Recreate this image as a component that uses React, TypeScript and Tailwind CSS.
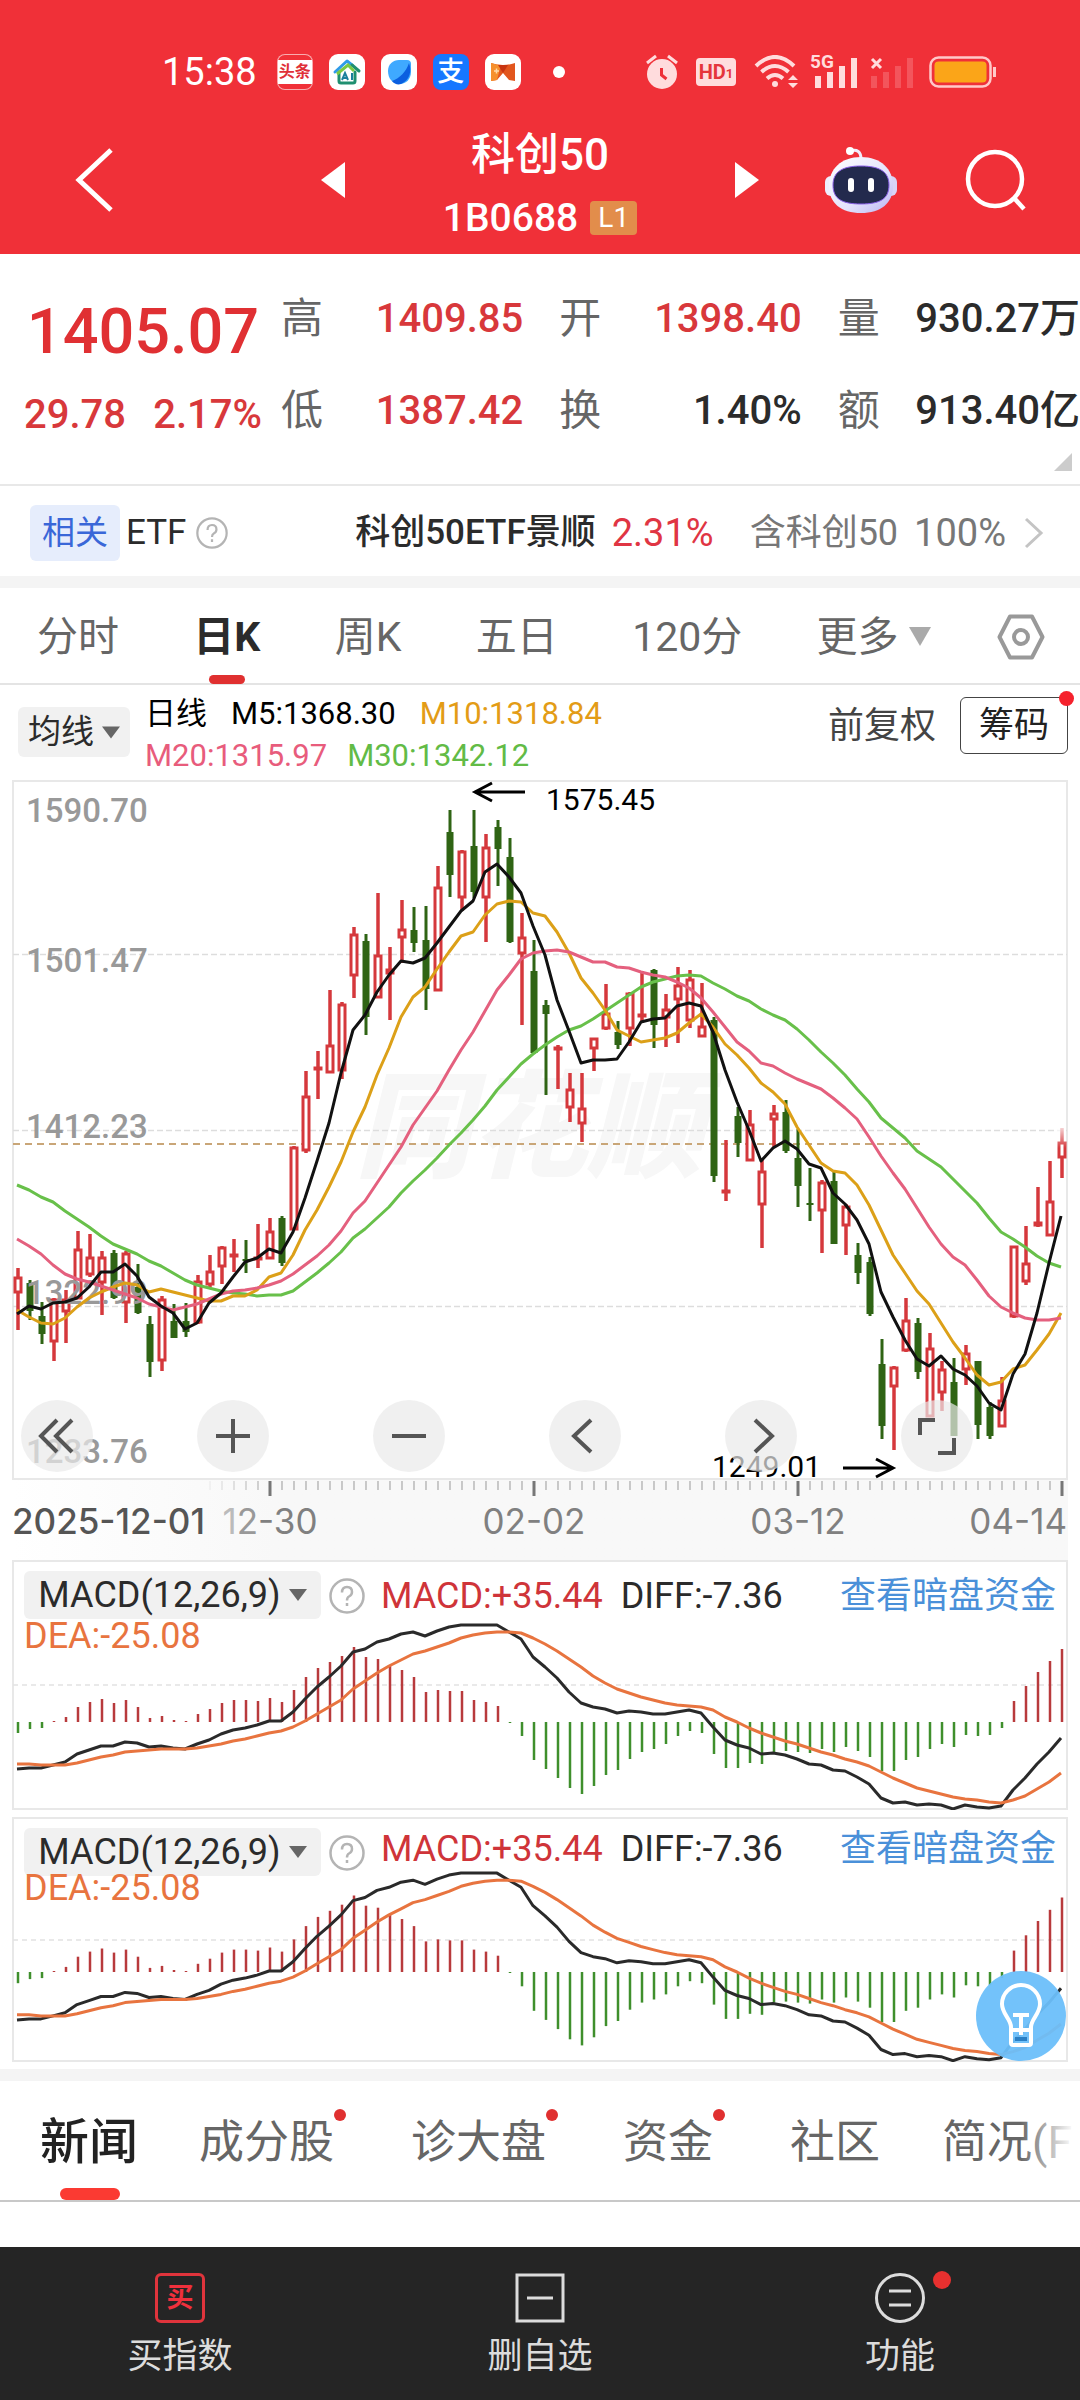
import React from "react";

type Candle = [up: 0 | 1, high: number, top: number, bottom: number, low: number];

const candles: Candle[] = [
  [1, 1268, 1277, 1293, 1330], [0, 1280, 1283, 1311, 1320], [0, 1302, 1316, 1334, 1344], [1, 1298, 1299, 1342, 1361],
  [1, 1290, 1299, 1312, 1343], [1, 1231, 1249, 1299, 1299], [1, 1234, 1257, 1275, 1277], [1, 1251, 1257, 1283, 1315],
  [0, 1250, 1253, 1298, 1299], [1, 1251, 1253, 1303, 1323], [0, 1264, 1287, 1313, 1314], [0, 1316, 1324, 1362, 1377],
  [1, 1296, 1299, 1361, 1371], [0, 1304, 1321, 1338, 1338], [0, 1303, 1321, 1332, 1337], [1, 1275, 1281, 1323, 1324],
  [1, 1255, 1271, 1285, 1287], [1, 1246, 1247, 1267, 1284], [1, 1239, 1254, 1257, 1272], [0, 1240, 1259, 1260, 1273],
  [1, 1224, 1257, 1260, 1268], [1, 1218, 1231, 1259, 1259], [0, 1216, 1218, 1263, 1266], [1, 1146, 1147, 1230, 1230],
  [1, 1071, 1096, 1151, 1153], [1, 1051, 1067, 1070, 1099], [1, 990, 1045, 1073, 1073], [1, 1002, 1004, 1071, 1079],
  [1, 927, 934, 976, 998], [0, 934, 941, 1017, 1035], [1, 893, 955, 998, 998], [1, 947, 969, 974, 1020],
  [1, 900, 929, 938, 963], [0, 907, 930, 943, 952], [0, 906, 940, 989, 1010], [1, 866, 887, 991, 991],
  [0, 810, 832, 875, 897], [1, 850, 851, 898, 911], [0, 810, 846, 892, 898], [1, 834, 847, 898, 942],
  [0, 820, 827, 849, 886], [0, 838, 857, 942, 943], [1, 913, 937, 954, 1025], [0, 940, 971, 1053, 1054],
  [0, 1000, 1005, 1014, 1095], [1, 1045, 1047, 1049, 1089], [1, 1073, 1089, 1108, 1122], [1, 1073, 1108, 1124, 1142],
  [1, 1038, 1038, 1049, 1071], [1, 984, 1013, 1029, 1030], [0, 1021, 1032, 1045, 1049], [1, 992, 993, 1029, 1046],
  [1, 971, 1014, 1016, 1023], [0, 969, 970, 1025, 1048], [1, 994, 1009, 1018, 1047], [1, 967, 985, 1000, 1043],
  [1, 970, 979, 1021, 1028], [1, 983, 1026, 1037, 1037], [0, 1017, 1020, 1176, 1182], [1, 1140, 1190, 1193, 1201],
  [0, 1107, 1116, 1143, 1157], [1, 1110, 1124, 1161, 1161], [1, 1160, 1171, 1205, 1248], [1, 1105, 1113, 1120, 1147],
  [0, 1100, 1112, 1151, 1153], [0, 1129, 1158, 1186, 1207], [0, 1168, 1203, 1204, 1221], [1, 1180, 1182, 1211, 1253],
  [0, 1170, 1181, 1244, 1244], [1, 1204, 1206, 1226, 1255], [0, 1243, 1255, 1273, 1284], [0, 1257, 1262, 1314, 1316],
  [0, 1339, 1364, 1426, 1439], [1, 1366, 1367, 1387, 1450], [1, 1298, 1320, 1351, 1352], [0, 1318, 1323, 1372, 1379],
  [1, 1333, 1348, 1417, 1417], [1, 1361, 1369, 1393, 1411], [0, 1358, 1382, 1436, 1436], [1, 1345, 1353, 1370, 1385],
  [0, 1361, 1361, 1425, 1439], [0, 1402, 1407, 1436, 1439], [1, 1377, 1400, 1427, 1427], [1, 1246, 1246, 1317, 1318],
  [1, 1226, 1263, 1282, 1285], [1, 1187, 1222, 1226, 1227], [1, 1161, 1201, 1236, 1236], [1, 1128, 1142, 1158, 1178],
];

const ma5 = [1314, 1306, 1309, 1303, 1302, 1298, 1287, 1272, 1272, 1264, 1276, 1297, 1306, 1313, 1329, 1323, 1303, 1293, 1277, 1262, 1258, 1249, 1253, 1232, 1198, 1161, 1123, 1073, 1030, 1015, 992, 975, 961, 963, 958, 943, 927, 911, 901, 872, 864, 877, 893, 926, 955, 1000, 1031, 1063, 1060, 1060, 1059, 1042, 1022, 1019, 1018, 1006, 1003, 1006, 1032, 1070, 1102, 1130, 1161, 1148, 1141, 1149, 1164, 1168, 1193, 1204, 1220, 1244, 1292, 1317, 1340, 1359, 1366, 1356, 1369, 1375, 1386, 1403, 1410, 1374, 1354, 1313, 1263, 1216];
const ma10 = [1310, 1317, 1323, 1324, 1318, 1307, 1298, 1292, 1287, 1283, 1285, 1292, 1289, 1292, 1295, 1298, 1301, 1301, 1296, 1296, 1290, 1277, 1273, 1255, 1230, 1210, 1187, 1162, 1132, 1107, 1075, 1048, 1017, 997, 987, 969, 952, 936, 932, 915, 904, 901, 902, 913, 916, 932, 953, 978, 993, 1010, 1030, 1036, 1042, 1040, 1038, 1033, 1023, 1014, 1027, 1044, 1055, 1068, 1083, 1092, 1104, 1127, 1145, 1163, 1171, 1173, 1185, 1205, 1230, 1255, 1273, 1291, 1304, 1323, 1342, 1358, 1375, 1385, 1382, 1369, 1365, 1350, 1334, 1313];
const ma20 = [1239, 1246, 1254, 1265, 1274, 1279, 1282, 1286, 1290, 1294, 1298, 1304, 1307, 1310, 1307, 1304, 1299, 1294, 1291, 1290, 1288, 1285, 1281, 1274, 1265, 1256, 1245, 1231, 1213, 1201, 1183, 1165, 1147, 1125, 1108, 1091, 1070, 1050, 1032, 1011, 990, 975, 959, 953, 951, 950, 952, 957, 962, 962, 967, 968, 972, 975, 977, 982, 988, 998, 1012, 1027, 1042, 1051, 1063, 1066, 1073, 1079, 1084, 1089, 1098, 1108, 1119, 1137, 1156, 1173, 1189, 1208, 1227, 1244, 1257, 1265, 1280, 1296, 1307, 1313, 1318, 1320, 1320, 1318];
const ma30 = [1185, 1190, 1197, 1202, 1211, 1219, 1227, 1236, 1244, 1249, 1254, 1261, 1266, 1273, 1280, 1285, 1288, 1291, 1293, 1294, 1296, 1295, 1295, 1291, 1282, 1273, 1263, 1252, 1238, 1229, 1218, 1207, 1193, 1181, 1170, 1158, 1145, 1133, 1120, 1106, 1090, 1077, 1064, 1054, 1045, 1037, 1030, 1026, 1019, 1011, 1003, 995, 987, 982, 979, 976, 975, 976, 983, 989, 996, 1001, 1009, 1015, 1020, 1029, 1040, 1052, 1063, 1075, 1089, 1102, 1118, 1128, 1138, 1151, 1159, 1167, 1179, 1191, 1203, 1218, 1232, 1239, 1247, 1256, 1263, 1267];

const macdBars = [11, 7, 6, -1, -5, -15, -20, -23, -19, -22, -15, -4, -6, -2, -1, -8, -13, -19, -22, -22, -21, -24, -20, -32, -45, -54, -60, -66, -75, -65, -63, -57, -52, -45, -30, -32, -31, -31, -22, -20, -16, 1, 14, 38, 47, 56, 66, 72, 64, 53, 48, 37, 30, 27, 22, 14, 9, 11, 32, 46, 46, 41, 42, 30, 29, 30, 31, 27, 30, 25, 29, 35, 49, 49, 38, 35, 27, 22, 25, 13, 14, 13, 6, -21, -36, -50, -61, -73];
const diff = [47, 46, 46, 43, 40, 32, 28, 24, 24, 20, 21, 25, 24, 26, 27, 22, 18, 12, 8, 6, 3, -1, -1, -10, -23, -35, -45, -56, -70, -73, -80, -83, -88, -90, -86, -91, -95, -97, -97, -97, -97, -90, -83, -65, -55, -44, -30, -19, -15, -13, -9, -11, -10, -8, -8, -10, -12, -9, 5, 18, 23, 26, 32, 31, 33, 37, 42, 43, 48, 49, 55, 62, 76, 81, 80, 83, 82, 83, 87, 83, 85, 86, 84, 68, 56, 42, 30, 16];
const dea = [42, 42, 43, 43, 43, 41, 38, 35, 33, 30, 29, 28, 27, 27, 27, 26, 24, 22, 19, 17, 14, 11, 9, 5, -1, -8, -15, -22, -33, -41, -49, -56, -62, -68, -71, -75, -79, -84, -87, -89, -90, -90, -89, -84, -78, -71, -63, -55, -46, -39, -33, -29, -25, -22, -19, -17, -16, -15, -12, -5, 0, 6, 11, 15, 19, 22, 26, 30, 33, 37, 40, 44, 50, 56, 61, 66, 69, 72, 75, 77, 78, 80, 81, 78, 74, 67, 60, 51];

const px = (i: number) => 5 + i * 12;
const line = (ys: number[], offset: number, scale = 1) =>
  ys.map((y, i) => `${px(i)},${(y * scale + offset).toFixed(1)}`).join(" ");

const TOP = 780;

function StatusBar() {
  return (
    <div className="flex items-center justify-between pr-[83px] pl-[162px] text-white">
      <div className="flex items-center gap-4">
        <span className="mr-1 text-[38px] leading-[40px]">15:38</span>
        <span className="flex size-9 items-center justify-center rounded-lg border border-white/60 bg-[#f03038]">
          <span className="w-full bg-white text-center text-[16px] leading-[24px] font-bold text-[#e03038]">头条</span>
        </span>
        <svg className="size-9" viewBox="0 0 36 36">
          <rect width="36" height="36" rx="9" fill="#fff" />
          <path d="M6 18 18 7l5 4" fill="none" stroke="#2f9be8" strokeWidth="3" strokeLinecap="round" strokeLinejoin="round" />
          <path d="M23 11l7 6M10 18v9q0 2 2 2h12q2 0 2-2v-9" fill="none" stroke="#1f8f70" strokeWidth="3" strokeLinecap="round" />
          <path d="M8 20 19 11l6 6" fill="none" stroke="#7ac943" strokeWidth="3" />
          <path d="m13 26 3-7 3 7M14 24h4M23 19v7" fill="none" stroke="#1b7f9c" strokeWidth="2" />
        </svg>
        <svg className="size-9" viewBox="0 0 36 36">
          <rect width="36" height="36" rx="9" fill="#fff" />
          <path d="M7 17C7 10 12 6 18 6h8q4 0 4 4v8c0 7-5 12-11 12C12 30 7 25 7 17Z" fill="#3fa9ff" />
          <path d="M28 9c3 8 1 17-8 21-3 1-7 0-9-3 8-3 14-9 17-18Z" fill="#0b5fe0" />
        </svg>
        <span className="flex size-9 items-center justify-center rounded-lg bg-[#1677ff] text-[27px] leading-[36px] font-medium">支</span>
        <svg className="size-9" viewBox="0 0 36 36">
          <rect width="36" height="36" rx="9" fill="#fff" />
          <path d="M6 9q12 4 24 0v18l-6-1-6-7-6 7-6 1Z" fill="#e2561d" />
          <path d="M6 9q5 2 10 2l-4 15-6 1Z" fill="#f6902c" />
          <path d="M13 11h10l-5 8Z" fill="#c83410" />
          <path d="M9 17h5M11.500 14.500v5" stroke="#ffd9a8" strokeWidth="1.500" />
        </svg>
        <span className="ml-4 size-3 rounded-full bg-white" />
      </div>
      <div className="flex items-center text-[#ffdcdd]">
        <svg className="mr-[18px] h-9 w-8" viewBox="0 0 32 36" fill="currentColor">
          <circle cx="16" cy="20" r="15" />
          <path d="m1 9 9-7M31 9l-9-7" stroke="currentColor" strokeWidth="3" />
          <path d="M15.500 14v7l5 4" stroke="#ee3038" strokeWidth="3" fill="none" />
        </svg>
        <span className="mr-[18px] flex h-7 w-10 items-center justify-center rounded-sm bg-[#ffdcdd] text-[20px] leading-[28px] font-bold text-[#e5353c]">
          HD<span className="pt-1 text-[13px]">1</span>
        </span>
        <svg className="mr-[10px] h-[34px] w-[46px]" viewBox="0 0 46 34" fill="none" stroke="currentColor" strokeWidth="4">
          <path d="M2 11Q21-7 40 11M7.500 17Q21 5 34.500 17M13 23.500q8-7 16 0" />
          <circle cx="21" cy="29" r="3" fill="currentColor" stroke="none" />
          <path d="m34 25 5-5 5 5ZM34 28l5 5 5-5Z" fill="currentColor" stroke="none" />
        </svg>
        <span className="relative mr-3">
          <svg className="h-[34px] w-12" viewBox="0 0 48 34" fill="currentColor">
            <path d="M5 21h6v12H5ZM17 17h6v16h-6ZM29 11h6v22h-6ZM41 3h6v30h-6Z" />
          </svg>
          <span className="absolute -top-1 left-0 text-[19px] leading-[22px] font-bold">5G</span>
        </span>
        <svg className="mr-[15px] h-[34px] w-11" viewBox="0 0 44 34" fill="currentColor">
          <path d="M1 21h6v12H1ZM13 17h6v16h-6ZM25 11h6v22h-6ZM37 3h6v30h-6Z" opacity=".22" />
          <path d="m2 4 9 9m0-9-9 9" stroke="currentColor" strokeWidth="3" />
        </svg>
        <svg className="h-8 w-[68px]" viewBox="0 0 68 32" fill="none">
          <rect x="1.500" y="1.500" width="60" height="29" rx="8" stroke="#ffc9c9" strokeWidth="2.500" />
          <rect x="5.500" y="5.500" width="52" height="21" rx="4" fill="#fba518" />
          <path d="M65.500 11v10" stroke="#ffc9c9" strokeWidth="3" />
        </svg>
      </div>
    </div>
  );
}

function Robot() {
  return (
    <svg className="h-[68px] w-[74px]" viewBox="0 0 74 68">
      <defs>
        <linearGradient id="shell" x1="0" y1="0" x2="1" y2="1">
          <stop offset="0" stopColor="#fff" />
          <stop offset=".6" stopColor="#e4e2fb" />
          <stop offset="1" stopColor="#b9b4f2" />
        </linearGradient>
      </defs>
      <path d="M26 5q11-3 11 8" fill="none" stroke="#f0ecfb" strokeWidth="3" />
      <circle cx="26" cy="5" r="4" fill="#fff" />
      <rect x="1" y="30" width="12" height="20" rx="6" fill="#eeeefd" />
      <rect x="61" y="30" width="12" height="20" rx="6" fill="#d9d4f6" />
      <path d="M37 11c20 0 32 12 32 29S57 67 37 67 5 57 5 40s12-29 32-29Z" fill="url(#shell)" />
      <path d="M37 20c19 0 28 6 28 19 0 14-9 19-28 19S9 53 9 39c0-13 9-19 28-19Z" fill="#232a4d" stroke="#8a5fe8" strokeWidth="1" />
      <rect x="24" y="32" width="6" height="14" rx="3" fill="#fff" />
      <rect x="44" y="32" width="6" height="14" rx="3" fill="#fff" />
    </svg>
  );
}

function Header() {
  return (
    <header className="h-[254px] bg-[#f03038] pt-[52px]">
      <StatusBar />
      <div className="grid grid-cols-[1fr_390px_1fr] items-center pt-[30px]">
        <div className="flex items-center justify-between pb-[10px] pl-[74px]">
          <button aria-label="返回">
            <svg className="h-[66px] w-10" viewBox="0 0 40 66" fill="none" stroke="#fff" strokeWidth="5">
              <path d="M37 3 5 33l32 30" />
            </svg>
          </button>
          <button aria-label="上一个">
            <svg className="h-9 w-6" viewBox="0 0 24 36" fill="#fff"><path d="M24 0v36L0 18Z" /></svg>
          </button>
        </div>
        <div className="flex flex-col items-center text-white">
          <h1 className="text-[44px] leading-[66px] font-medium">科创50</h1>
          <div className="flex items-center gap-3">
            <span className="text-[39px] leading-[60px] font-medium">1B0688</span>
            <span className="h-[34px] w-[47px] rounded-sm bg-[#e28d4b] text-center text-[28px] leading-[34px]">L1</span>
          </div>
        </div>
        <div className="flex items-center pr-[52px] pb-[10px]">
          <button aria-label="下一个">
            <svg className="h-9 w-6" viewBox="0 0 24 36" fill="#fff"><path d="M0 0v36l24-18Z" /></svg>
          </button>
          <button aria-label="智能助手" className="mr-auto ml-[65px]"><Robot /></button>
          <button aria-label="搜索">
            <svg className="size-16" viewBox="0 0 64 64" fill="none" stroke="#fff" strokeWidth="4.500">
              <circle cx="31" cy="31" r="27" />
              <path d="m50 50 10 11" />
            </svg>
          </button>
        </div>
      </div>
    </header>
  );
}

const quotes = [
  { label: "高", value: "1409.85", red: true },
  { label: "开", value: "1398.40", red: true },
  { label: "量", value: "930.27万", red: false },
  { label: "低", value: "1387.42", red: true },
  { label: "换", value: "1.40%", red: false },
  { label: "额", value: "913.40亿", red: false },
];

function Quote() {
  return (
    <section className="relative flex h-[232px] border-b-2 border-[#e8e8e8] pt-[36px]">
      <div className="w-[281px] pl-[24px]">
        <div className="w-[238px] text-center text-[63px] leading-[84px] font-medium text-[#e03033]">1405.07</div>
        <div className="flex w-[238px] justify-between pt-[16px] text-[40px] leading-[50px] font-medium text-[#d8383b]">
          <span>29.78</span>
          <span>2.17%</span>
        </div>
      </div>
      <dl className="grid flex-1 grid-cols-3 content-start gap-x-9 text-[40px] font-medium">
        {quotes.map((q) => (
          <div key={q.label} className="flex h-[92px] justify-between whitespace-nowrap leading-[58px]">
            <dt className="text-[42px] font-normal text-[#666]">{q.label}</dt>
            <dd className={q.red ? "text-[#d8383b]" : "text-[#2b2b2b]"}>{q.value}</dd>
          </div>
        ))}
      </dl>
      <svg className="absolute right-[8px] bottom-[13px] h-[18px] w-[18px]" viewBox="0 0 18 18" fill="#ccc"><path d="M18 0v18H0Z" /></svg>
    </section>
  );
}

function Help({ className }: { className: string }) {
  return (
    <svg className={className} viewBox="0 0 36 36" fill="none" stroke="#b4b4b4" strokeWidth="2.500">
      <circle cx="18" cy="18" r="16.500" />
      <path d="M13 14.500q0-5.500 5-5.500t5 5q0 3-3 4.500-2 1-2 4M18 25v3" />
    </svg>
  );
}

function EtfRow() {
  return (
    <section className="flex h-[90px] items-center pt-[3px] pr-[36px] pl-[30px] text-[35px] leading-[56px] whitespace-nowrap text-[#2b2b2b]">
      <span className="rounded-md bg-[#e6edfc] px-3 text-[33px] text-[#3a67d8]">相关</span>
      <span className="ml-[6px]">ETF</span>
      <button aria-label="说明" className="ml-[10px]"><Help className="size-8" /></button>
      <a href="#etf" className="ml-auto flex items-center">
        <span className="font-medium">科创50ETF景顺</span>
        <span className="ml-4 text-[38px] text-[#e03543]">2.31%</span>
        <span className="ml-9 text-[36px] text-[#777]">含科创50</span>
        <span className="ml-4 text-[38px] text-[#777]">100%</span>
        <svg className="ml-[18px] h-8 w-5" viewBox="0 0 20 32" fill="none" stroke="#c4c4c4" strokeWidth="3"><path d="m2 2 15 14L2 30" /></svg>
      </a>
    </section>
  );
}

function PeriodTabs() {
  return (
    <nav className="flex h-[97px] items-center justify-between border-b-2 border-[#e4e4e4] pt-[2px] pr-[35px] pl-[37px] text-[41px] leading-[60px] text-[#666]">
      <button>分时</button>
      <button className="relative font-bold text-[#2b2b2b]">
        日K
        <span className="absolute -bottom-[17px] left-1/2 h-[9px] w-9 -translate-x-1/2 rounded-full bg-[#e03030]" />
      </button>
      <button>周K</button>
      <button>五日</button>
      <button>120分</button>
      <button className="-mr-2 flex items-center gap-[10px]">
        更多
        <svg className="h-[19px] w-[22px]" viewBox="0 0 22 19" fill="#aaa"><path d="M0 0h22L11 19Z" /></svg>
      </button>
      <button aria-label="设置">
        <svg className="h-[46px] w-12" viewBox="0 0 48 46" fill="none" stroke="#999" strokeWidth="4">
          <path d="M13 2.500h22L45.500 23 35 43.500H13L2.500 23Z" strokeLinejoin="round" />
          <circle cx="24" cy="23" r="7" />
        </svg>
      </button>
    </nav>
  );
}

function Legend() {
  return (
    <section className="flex h-[95px] items-start justify-between pr-[12px] pl-[18px] whitespace-nowrap">
      <div className="flex items-start">
        <button className="mt-[22px] flex h-[50px] items-center gap-2 rounded-md bg-[#f1f1f1] px-[10px] text-[33px] text-[#2b2b2b]">
          均线
          <svg className="h-[13px] w-[18px]" viewBox="0 0 18 12" fill="#666"><path d="M0 0h18L9 12Z" /></svg>
        </button>
        <div className="ml-[15px] pt-[8px] text-[31px] leading-[42px]">
          <div className="flex">
            <span className="text-black">日线</span>
            <span className="ml-6 text-black">M5:1368.30</span>
            <span className="ml-6 text-[#e39c16]">M10:1318.84</span>
          </div>
          <div className="flex">
            <span className="text-[#e85c7c]">M20:1315.97</span>
            <span className="ml-5 text-[#62bb46]">M30:1342.12</span>
          </div>
        </div>
      </div>
      <div className="flex items-center pt-[12px]">
        <button className="text-[36px] leading-[56px] text-[#444]">前复权</button>
        <button className="relative ml-6 h-[57px] rounded-md border-[1px] border-[#444] px-[18px] text-[35px] leading-[54px] text-[#222]">
          筹码
          <span className="absolute -top-[7px] -right-[7px] size-[15px] rounded-full bg-[#f5222d]" />
        </button>
      </div>
    </section>
  );
}

const controls = [
  { label: "最早", d: "M36 20 20 36l16 16M51 20 35 36l16 16" },
  { label: "放大", d: "M36 19v34M19 36h34" },
  { label: "缩小", d: "M19 36h34" },
  { label: "左移", d: "M42 20 25 36l17 16" },
  { label: "右移", d: "M30 20l17 16-17 16" },
  { label: "全屏", d: "M34 20H19v15M53 38v15H37" },
];

function KChart() {
  const yLabels: [number, string][] = [[822, "1590.70"], [972, "1501.47"], [1138, "1412.23"], [1304, "1322.99"], [1463, "1233.76"]];
  return (
    <section className="relative mx-3">
      <svg className="block w-full" viewBox="0 0 1056 700" fontFamily="Roboto">
        <defs>
          <linearGradient id="fade" gradientUnits="userSpaceOnUse" x1="0" y1="1122" x2="0" y2="1148">
            <stop offset="0" stopColor="#fff" />
            <stop offset="1" stopColor="#fff" stopOpacity="0" />
          </linearGradient>
        </defs>
        <rect x="1" y="1" width="1054" height="698" fill="#fff" stroke="#e8e8e8" strokeWidth="2" />
        <text x="343" y="388" fontSize="116" fontWeight="900" fontStyle="italic" fill="#f7f7f7" fontFamily="Noto Sans CJK SC">同花顺</text>
        <g transform={`translate(0 ${-TOP})`}>
          <path d="M1 954.500h1054M1 1130.500h1054M1 1306.500h1054" stroke="#ddd" strokeWidth="1.500" strokeDasharray="6 3" />
          <path d="M1 1144h910" stroke="#c9a678" strokeWidth="2" strokeDasharray="7 5" />
          {candles.map(([up, h, t, b, l], i) => {
            const x = px(i) + 1;
            return up ? (
              <g key={i} stroke="#d5383c" fill="#fff">
                <path d={`M${x} ${h}V${l}`} strokeWidth="3.500" />
                <rect x={x - 3} y={t + 1} width="6" height={Math.max(b - t - 2, 1)} strokeWidth="3" />
              </g>
            ) : (
              <g key={i} fill="#2f6414">
                <rect x={x - 1.5} y={h} width="3" height={l - h} />
                <rect x={x - 3.5} y={t} width="7" height={Math.max(b - t, 2)} />
              </g>
            );
          })}
          <rect x="1042" y="1122" width="12" height="26" fill="url(#fade)" />
          <g fill="#999" fontSize="33" fontWeight="500">
            {yLabels.map(([y, t]) => <text key={t} x="14" y={y}>{t}</text>)}
          </g>
          <g fill="none" strokeWidth="3" strokeLinejoin="round">
            <polyline points={line(ma30, 0)} stroke="#68c04a" />
            <polyline points={line(ma10, 0)} stroke="#dca018" />
            <polyline points={line(ma20, 0)} stroke="#e4607e" />
            <polyline points={line(ma5, 0)} stroke="#111" />
          </g>
          <g fill="none" stroke="#000" strokeWidth="3">
            <path d="M513 792h-50m17-9-17 9 17 9M831 1468h50m-17-9 17 9-17 9" />
          </g>
          <g fontSize="30" fill="#000">
            <text x="534" y="810">1575.45</text>
            <text x="700" y="1477">1249.01</text>
          </g>
        </g>
      </svg>
      <div className="absolute inset-x-0 bottom-[8px] flex justify-between pr-[95px] pl-[9px]">
        {controls.map((c) => (
          <button key={c.label} aria-label={c.label} className="size-[72px] rounded-full bg-[#e9e9e9]/70">
            <svg viewBox="0 0 72 72" fill="none" stroke="#555" strokeWidth="4"><path d={c.d} /></svg>
          </button>
        ))}
      </div>
    </section>
  );
}

function DateAxis() {
  return (
    <section className="mx-3 bg-gradient-to-r from-white to-[#f8f8f8] to-25%">
      <svg className="block w-full" viewBox="0 0 1056 80" fontFamily="Inter" fontSize="35" fill="#808080">
        {candles.map((_, i) => {
          if (i < 16) return null;
          const major = i % 22 === 21;
          return (
            <path
              key={i}
              d={`M${px(i) + 1} 1v${major ? 15 : 9}`}
              stroke={major ? "#777" : "#999"}
              strokeWidth={major ? 3 : 1}
              opacity={i < 21 ? (i - 15) / 6 : 1}
            />
          );
        })}
        <text x="0" y="54" fill="#555" fontWeight="500">2025-12-01</text>
        <text x="258" y="54" textAnchor="middle"><tspan fill="#bbb">1</tspan><tspan fill="#999">2</tspan>-30</text>
        <text x="522" y="54" textAnchor="middle">02-02</text>
        <text x="786" y="54" textAnchor="middle">03-12</text>
        <text x="1055" y="54" textAnchor="end">04-14</text>
      </svg>
    </section>
  );
}

type PanelProps = { height: number; base: number; grid: number; scale: number; compact?: boolean };

function MacdPanel({ height, base, grid, scale, compact = false }: PanelProps) {
  return (
    <section className="relative mx-3">
      <svg className="block w-full" viewBox={`0 0 1056 ${height}`}>
        <rect x="1" y="1" width="1054" height={height - 2} fill="#fff" stroke="#e8e8e8" strokeWidth="2" />
        <path d={`M1 ${grid}h1054`} stroke="#e2e2e2" strokeWidth="1.500" strokeDasharray="5 4" />
        {macdBars.map((v, i) => (
          <path key={i} d={`M${px(i) + 1} ${base}v${(v * scale).toFixed(1)}`} stroke={v < 0 ? "#b83a3c" : "#3f8f2c"} strokeWidth="2.500" />
        ))}
        <g fill="none" strokeWidth="3" strokeLinejoin="round">
          <polyline points={line(diff, base, scale)} stroke="#2a2a2a" />
          <polyline points={line(dea, base, scale)} stroke="#e8743f" />
        </g>
      </svg>
      <div className="absolute inset-x-0 top-[11px] pr-[12px] pl-[12px] text-[36px] leading-[50px] whitespace-nowrap">
        <div className="flex h-[50px] items-start">
          <button className="flex h-12 w-[297px] items-center justify-center gap-2 rounded-md bg-[#f1f1f1] text-[#2b2b2b]">
            MACD(12,26,9)
            <svg className="h-3 w-[18px]" viewBox="0 0 18 12" fill="#666"><path d="M0 0h18L9 12Z" /></svg>
          </button>
          <button aria-label="指标说明" className="ml-2 pt-[7px]"><Help className="size-9" /></button>
          <div className={compact ? "ml-4 flex flex-1 leading-[42px]" : "ml-4 flex flex-1"}>
            <span className="text-[#cf3439]">MACD:+35.44</span>
            <span className="ml-[18px] text-[#2b2b2b]">DIFF:-7.36</span>
            <a href="#funds" className="ml-auto text-[#4a90d9]">查看暗盘资金</a>
          </div>
        </div>
        <div className={compact ? "-mt-[15px] text-[#e8743f]" : "-mt-[10px] text-[#e8743f]"}>DEA:-25.08</div>
      </div>
    </section>
  );
}

const newsTabs = [
  { label: "成分股", dot: true },
  { label: "诊大盘", dot: true },
  { label: "资金", dot: true },
  { label: "社区", dot: false },
];

function NewsTabs() {
  return (
    <nav className="relative flex h-[121px] items-center gap-[77px] overflow-hidden border-b-2 border-[#c8c8c8] pt-[5px] pl-[40px] text-[45px] leading-[64px] whitespace-nowrap text-[#666]">
      <button className="-mr-[16px] text-[49px] font-medium text-[#222]">新闻</button>
      <span className="absolute bottom-0 left-[60px] h-3 w-[60px] rounded-full bg-[#fb3a32]" />
      {newsTabs.map((t) => (
        <button key={t.label} className="relative">
          {t.label}
          {t.dot && <span className="absolute -top-[2px] -right-[12px] size-3 rounded-full bg-[#e03030]" />}
        </button>
      ))}
      <button className="-ml-[15px]">简况(F</button>
      <div className="absolute inset-y-0 right-0 w-[60px] bg-gradient-to-r from-white/0 to-white to-90%" />
    </nav>
  );
}

function BottomNav() {
  return (
    <footer className="grid h-[153px] grid-cols-3 bg-[#252525] pt-[26px] text-[35px] leading-[48px] text-[#dcdcdc]">
      <button className="flex flex-col items-center gap-[10px]">
        <span className="flex size-[50px] items-center justify-center rounded-md border-[3px] border-[#e0343c] text-[27px] leading-[44px] font-bold text-[#f0303c]">买</span>
        买指数
      </button>
      <button className="flex flex-col items-center gap-[10px]">
        <svg className="size-[50px]" viewBox="0 0 50 50" fill="none" stroke="#dcdcdc" strokeWidth="3"><path d="M2 2h46v46H2ZM12 25h26" /></svg>
        删自选
      </button>
      <button className="flex flex-col items-center gap-[10px]">
        <span className="relative">
          <svg className="size-[50px]" viewBox="0 0 50 50" fill="none" stroke="#dcdcdc" strokeWidth="3"><circle cx="25" cy="25" r="23.500" /><path d="M14 18h22M14 32h22" /></svg>
          <span className="absolute -top-[2px] -right-[26px] size-[18px] rounded-full bg-[#e8302f]" />
        </span>
        功能
      </button>
    </footer>
  );
}

export default function App() {
  return (
    <div className="min-h-screen bg-white font-['Roboto','Noto_Sans_CJK_SC',sans-serif]">
      <Header />
      <main>
        <Quote />
        <EtfRow />
        <div className="h-3 bg-[#f4f4f4]" />
        <PeriodTabs />
        <Legend />
        <KChart />
        <DateAxis />
        <MacdPanel height={250} base={162} grid={125} scale={1} />
        <div className="h-[7px]" />
        <div className="relative">
          <MacdPanel height={245} base={155} grid={123} scale={1.02} compact />
          <button aria-label="提示" className="absolute right-[14px] bottom-[1px] size-[90px] rounded-full bg-[#6cbffa]/95">
            <svg viewBox="0 0 90 90" fill="none" stroke="#fff" strokeWidth="4">
              <path d="M35 56c0-8-9-13-9-23a19 19 0 0 1 38 0c0 10-9 15-9 23v16q0 2-2 2H37q-2 0-2-2ZM37 44h16M45 44v20M35 59h20" />
              <path d="M39 68h12" stroke="#2a7fc4" />
            </svg>
          </button>
        </div>
        <div className="h-[7px]" />
        <div className="h-3 bg-[#f4f4f4]" />
        <NewsTabs />
        <div className="h-[45px]" />
      </main>
      <BottomNav />
    </div>
  );
}
